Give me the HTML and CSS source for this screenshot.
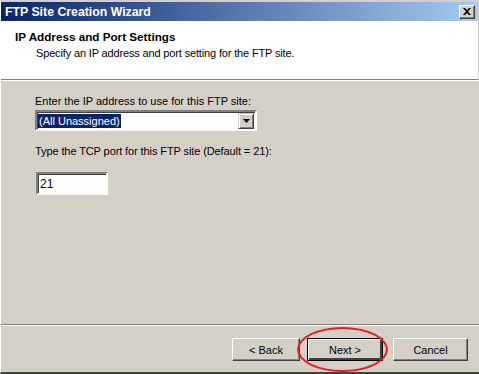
FILE: index.html
```html
<!DOCTYPE html>
<html lang="en">
<head>
  <meta charset="UTF-8" />
  <title>FTP Site Creation Wizard</title>
  <link rel="stylesheet" href="styles.css">
</head>
<body>
  <div class="window">
    <div class="title-bar">
      <span class="title-text">FTP Site Creation Wizard</span>
      <button class="close-btn" aria-label="Close">
        <svg width="8" height="7" viewBox="0 0 8 7">
          <path d="M0 0h2l2 2 2-2h2L5 3.5 8 7H6L4 5 2 7H0l3-3.5z" fill="#000"/>
        </svg>
      </button>
    </div>

    <div class="wizard-header">
      <h1>IP Address and Port Settings</h1>
      <p>Specify an IP address and port setting for the FTP site.</p>
    </div>

    <div class="wizard-body">
      <label class="field-label">Enter the IP address to use for this FTP site:</label>
      <div class="combo">
        <span class="combo-value"><span class="selected">(All Unassigned)</span></span>
        <span class="combo-arrow">
          <svg width="7" height="4" viewBox="0 0 7 4"><path d="M0 0h7L3.5 4z" fill="#000"/></svg>
        </span>
      </div>

      <label class="field-label port-label">Type the TCP port for this FTP site (Default = 21):</label>
      <div class="textbox">21</div>
    </div>

    <div class="wizard-footer">
      <button class="btn">&lt; Back</button>
      <button class="btn btn-default">Next &gt;</button>
      <button class="btn btn-cancel">Cancel</button>
      <div class="highlight-ring"></div>
    </div>
  </div>
</body>
</html>
```

FILE: styles.css
```css
body {
  margin: 0;
  padding: 0;
  background-color: #d4d0c8;
  font-family: "Liberation Sans", Arial, sans-serif;
  font-size: 11px;
  color: #000;
}

.window {
  position: relative;
  width: 479px;
  height: 374px;
  box-sizing: border-box;
  display: flex;
  flex-direction: column;
  background-color: #d4d0c8;
  border-top: 2px solid #d4d0c8;
  border-left: 1px solid #ffffff;
  border-bottom: 2px solid #404040;
  overflow: hidden;
}

.title-bar {
  height: 19px;
  flex-shrink: 0;
  margin-right: 1px;
  display: flex;
  align-items: center;
  justify-content: space-between;
  padding: 0 3px 0 4px;
  background: linear-gradient(to right, #0a246a, #a6caf0);
}

.title-text {
  color: #fff;
  font-weight: bold;
  font-size: 12.3px;
}

.close-btn {
  width: 16px;
  height: 14px;
  padding: 0;
  display: flex;
  align-items: center;
  justify-content: center;
  background-color: #d4d0c8;
  border: 1px solid;
  border-color: #fff #404040 #404040 #fff;
  box-shadow: inset -1px -1px 0 #808080;
}

.wizard-header {
  height: 59px;
  flex-shrink: 0;
  box-sizing: border-box;
  background-color: #fff;
  border-bottom: 1px solid #808080;
  padding: 9px 0 0 14px;
  margin-right: 1px;
}

.wizard-header h1 {
  margin: 0;
  font-size: 11.7px;
  font-weight: bold;
  line-height: 14px;
}

.wizard-header p {
  margin: 3px 0 0 21px;
  letter-spacing: -0.15px;
}

.wizard-body {
  flex: 1;
  padding: 14px 0 0 34px;
  border-top: 1px solid #fff;
  border-bottom: 1px solid #808080;
}

.field-label {
  display: block;
  line-height: 13px;
}

.port-label {
  margin-top: 14px;
  letter-spacing: -0.1px;
}

.combo {
  width: 222px;
  height: 21px;
  box-sizing: border-box;
  margin-top: 2px;
  display: flex;
  align-items: center;
  background-color: #fff;
  border: 2px solid;
  border-color: #808080 #fff #fff #808080;
  box-shadow: inset 1px 1px 0 #404040;
  padding: 1px;
}

.combo-value {
  flex: 1;
}

.selected {
  display: inline-block;
  background-color: #0a246a;
  color: #fff;
  padding: 0 1px;
  line-height: 14px;
}

.combo-arrow {
  width: 16px;
  height: 16px;
  box-sizing: border-box;
  display: flex;
  align-items: center;
  justify-content: center;
  background-color: #d4d0c8;
  border: 1px solid;
  border-color: #d4d0c8 #404040 #404040 #d4d0c8;
  box-shadow: inset 1px 1px 0 #fff, inset -1px -1px 0 #808080;
}

.textbox {
  width: 72px;
  height: 23px;
  box-sizing: border-box;
  margin: 14px 0 0 1px;
  padding: 3px 0 0 2px;
  background-color: #fff;
  border: 2px solid;
  border-color: #808080 #fff #fff #808080;
  box-shadow: inset 1px 1px 0 #404040;
  font-size: 12px;
}

.wizard-footer {
  position: relative;
  height: 47px;
  flex-shrink: 0;
  box-sizing: border-box;
  border-top: 1px solid #fff;
  display: flex;
  justify-content: flex-end;
  align-items: flex-start;
  padding: 12px 11px 0 0;
}

.btn {
  width: 68px;
  height: 23px;
  margin-left: 7px;
  box-sizing: border-box;
  background-color: #d4d0c8;
  border: 1px solid;
  border-color: #fff #404040 #404040 #fff;
  box-shadow: inset -1px -1px 0 #808080;
  font-family: "Liberation Sans", Arial, sans-serif;
  font-size: 11px;
  padding: 0;
  color: #000;
}

.btn-default {
  width: 76px;
  border: 1px solid #000;
  box-shadow: inset 1px 1px 0 #fff, inset -2px -2px 0 #404040, inset -1px -1px 0 #808080;
}

.btn-cancel {
  width: 75px;
  margin-left: 10px;
}

.highlight-ring {
  position: absolute;
  left: 296px;
  top: 1px;
  width: 91px;
  height: 45px;
  box-sizing: border-box;
  border: 2px solid #e41e1e;
  border-radius: 50%;
}
```
